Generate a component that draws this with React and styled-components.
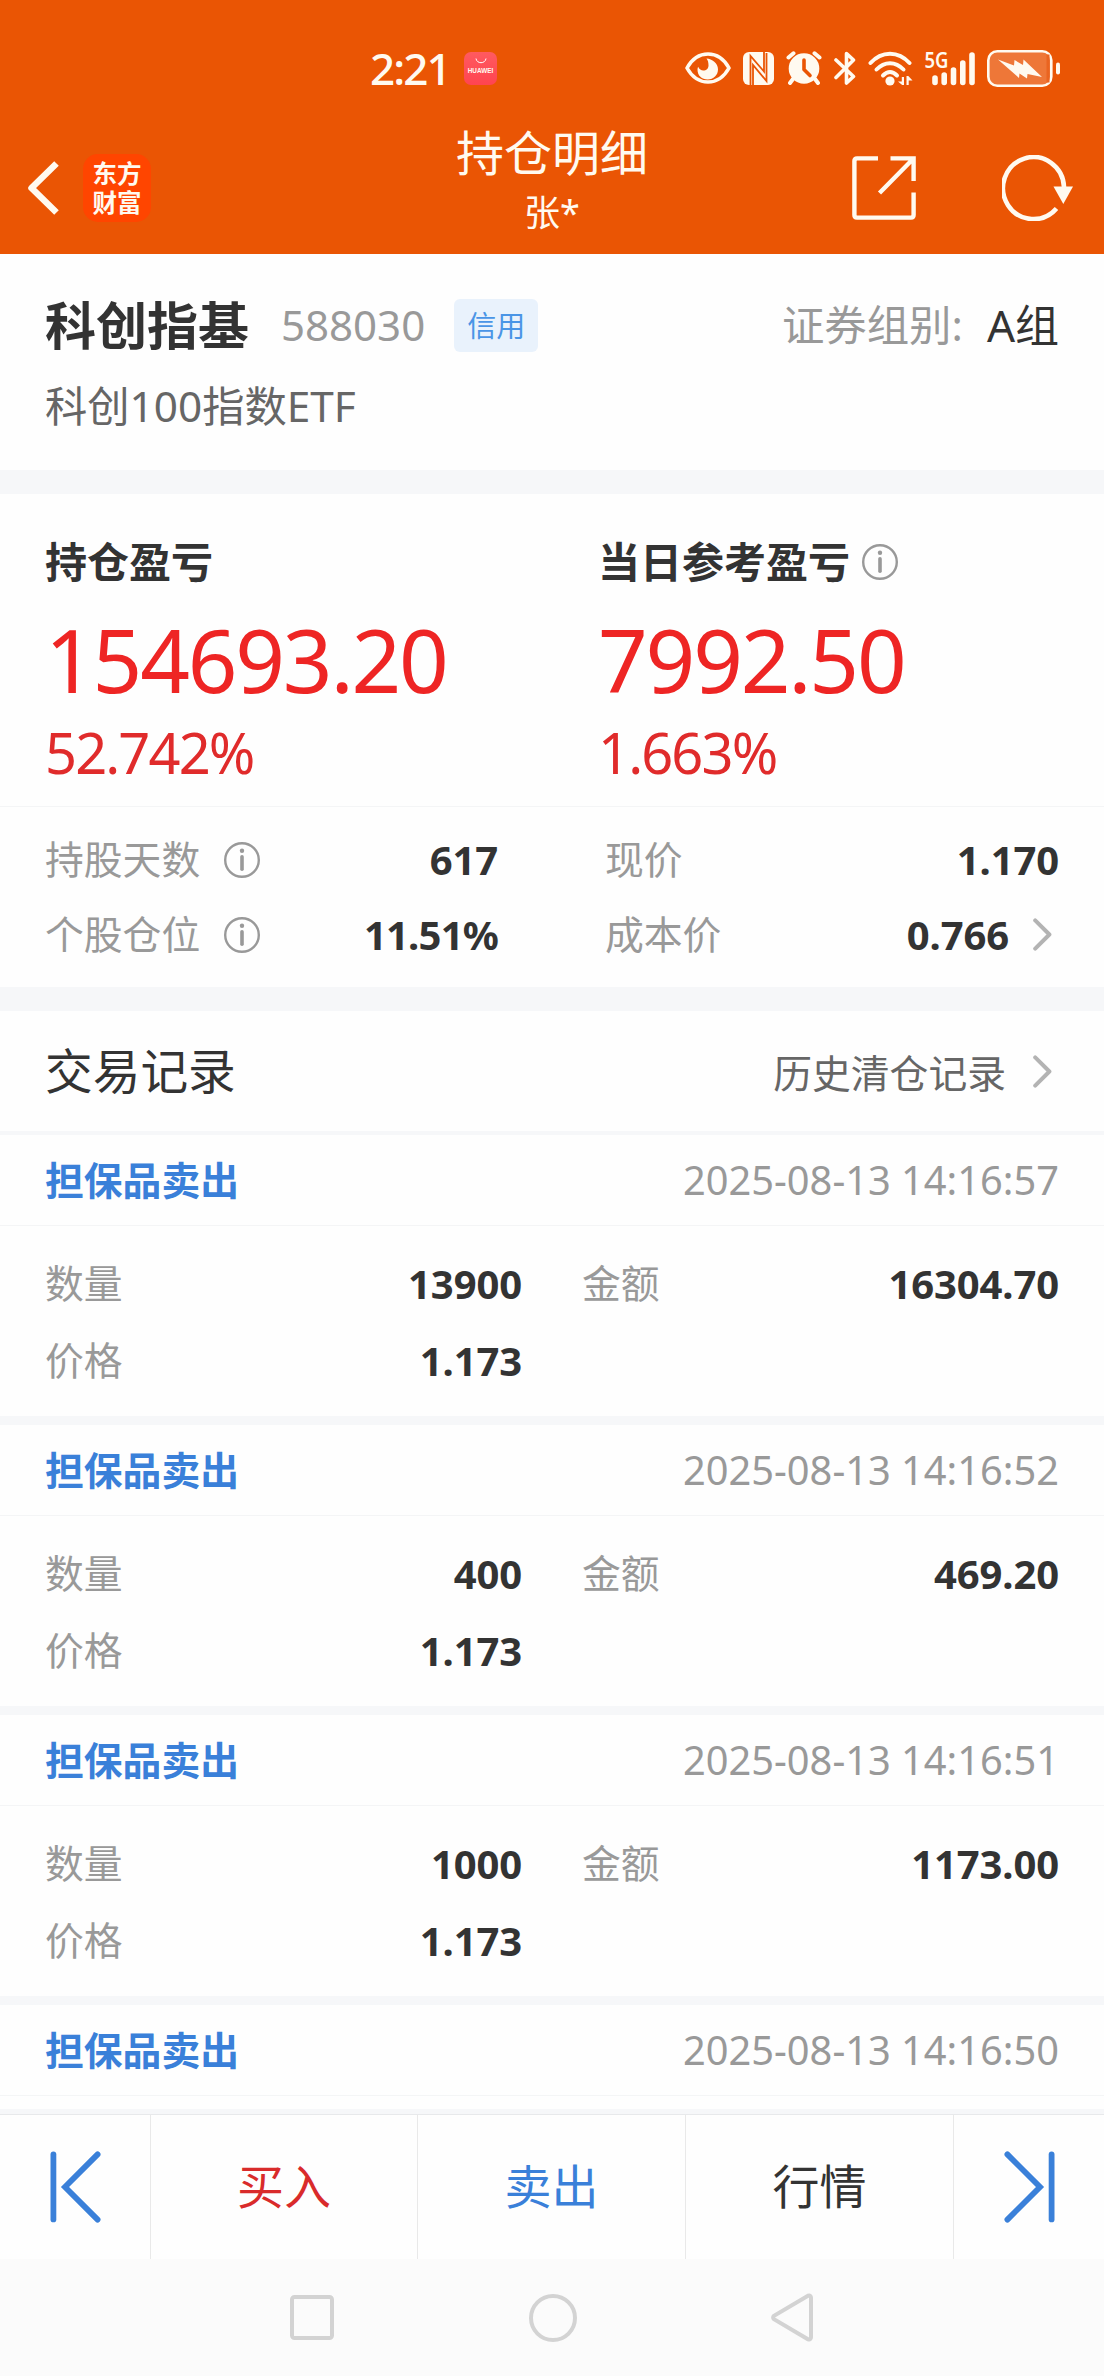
import styled, { createGlobalStyle } from "styled-components";

const GlobalStyle = createGlobalStyle`
  * {
    box-sizing: border-box;
  }
  body {
    margin: 0;
    background-color: #fff;
    color: #333;
    font-family: "Noto Sans", "Noto Sans CJK SC", sans-serif;
    line-height: 1.4;
  }
  svg {
    display: block;
    flex-shrink: 0;
  }
`;

const Screen = styled.div`
  display: flex;
  flex-direction: column;
  width: 1104px;
  height: 2376px;
  overflow: hidden;
  background-color: #fefefe;
`;

const StatusBar = styled.div`
  display: flex;
  align-items: center;
  height: 110px;
  padding: 26px 44px 0 370px;
  background-color: #ea5504;
  color: #fffaf0;
`;

const Clock = styled.span`
  width: 94px;
  font-size: 44px;
  font-weight: 500;
  line-height: 50px;
  letter-spacing: -1.9px;
`;

const GalleryBadge = styled.span`
  display: flex;
  flex-direction: column;
  align-items: center;
  gap: 3px;
  width: 33px;
  height: 33px;
  padding-top: 6px;
  border-radius: 7px;
  background: linear-gradient(#ff5a60, #ff4450);
  font-family: "Liberation Sans", sans-serif;
  font-size: 6.4px;
  font-weight: 700;
  line-height: 8px;
`;

const StatusIcons = styled.div`
  display: flex;
  align-items: center;
  gap: 12px;
  margin-left: auto;
`;

const TitleBar = styled.header`
  display: grid;
  grid-template-columns: 1fr 240px 1fr;
  align-items: center;
  height: 144px;
  padding: 10px 27px 12px;
  background-color: #ea5504;
  color: #fffaf0;
`;

const TitleSide = styled.div`
  display: flex;
  align-items: center;
  justify-content: ${(props) => (props.$end ? "flex-end" : "flex-start")};
  gap: ${(props) => (props.$end ? "86px" : "22px")};
  padding-top: 13px;
  margin: 0 ${(props) => (props.$end ? "4px" : "0")} 0 ${(props) => (props.$end ? "0" : "-2px")};
`;

const Brand = styled.div`
  width: 68px;
  height: 68px;
  padding-top: 5px;
  border-radius: 15px;
  background-color: #ff4500;
  font-size: 24.5px;
  font-weight: 700;
  line-height: 29px;
  text-align: center;
`;

const TitleText = styled.div`
  text-align: center;
`;

const Title = styled.h1`
  margin: 0;
  font-size: 48px;
  font-weight: 400;
  line-height: 64px;
`;

const Account = styled.div`
  font-size: 36px;
  line-height: 56px;
`;

const Gap = styled.div`
  flex-shrink: 0;
  height: ${(props) => props.$size}px;
  background-color: #f6f7f9;
`;

const StockCard = styled.section`
  height: 216px;
  padding: 40px 45px 0;
`;

const StockRow = styled.div`
  display: flex;
  align-items: center;
  height: 62px;
`;

const StockName = styled.span`
  font-size: 51px;
  font-weight: 700;
  line-height: 62px;
`;

const StockCode = styled.span`
  margin-left: 32px;
  color: #999;
  font-size: 42px;
`;

const Tag = styled.span`
  width: 84px;
  height: 53px;
  margin-left: 29px;
  border-radius: 6px;
  background-color: #e9f2fc;
  color: #4a95e6;
  font-size: 29px;
  line-height: 53px;
  text-align: center;
`;

const Group = styled.span`
  display: flex;
  gap: 24px;
  margin-left: auto;
  font-size: 42.4px;
  line-height: 62px;
`;

const GroupName = styled.span`
  font-size: 44px;
`;

const Muted = styled.span`
  color: #999;
`;

const FundName = styled.div`
  margin-top: 18px;
  color: #666;
  font-size: 42.3px;
  line-height: 64px;
`;

const Profit = styled.section`
  display: grid;
  grid-template-columns: 553px 1fr;
  height: 313px;
  padding: 40px 45px 0;
  border-bottom: 1px solid #f4f5f6;
`;

const ProfitTitle = styled.div`
  display: flex;
  align-items: center;
  gap: 12px;
  height: 56px;
  font-size: 42px;
  font-weight: 700;
`;

const ProfitAmount = styled.div`
  margin-top: 19px;
  color: #ee2524;
  font-size: 87px;
  line-height: 100px;
  letter-spacing: -2.2px;
`;

const ProfitRate = styled.div`
  margin-top: 11px;
  color: #e02b2b;
  font-size: 56px;
  line-height: 64px;
  letter-spacing: -1.9px;
`;

const Details = styled.section`
  display: grid;
  grid-template-columns: 453px 454px;
  grid-auto-rows: 75px;
  justify-content: space-between;
  height: 180px;
  padding: 15px 45px 0;
`;

const Field = styled.div`
  display: flex;
  align-items: center;
`;

const Label = styled.span`
  margin-right: 24px;
  color: #999;
  font-size: 38.8px;
`;

const Value = styled.span`
  margin-left: auto;
  font-size: 40px;
  font-weight: 700;
  letter-spacing: ${(props) => (props.$tight ? "-0.8px" : "-0.1px")};
`;

const ArrowSlot = styled.span`
  padding: 0 7px 0 ${(props) => props.$space}px;
`;

const RecordsHeader = styled.div`
  display: flex;
  align-items: center;
  height: 120px;
  padding: 0 45px;
`;

const RecordsTitle = styled.h2`
  margin: 0 auto 0 0;
  font-size: 47.7px;
  font-weight: 400;
`;

const HistoryLink = styled.span`
  padding-top: 5px;
  color: #666;
  font-size: 38.8px;
`;

const Records = styled.div`
  flex-shrink: 0;
  height: 974px;
  overflow: hidden;
`;

const Record = styled.article`
  height: 290px;
  border-bottom: 9px solid #f6f7f9;
`;

const RecordHead = styled.div`
  display: flex;
  align-items: center;
  justify-content: space-between;
  height: 91px;
  padding: 0 45px;
  border-bottom: 1px solid #f4f5f6;
`;

const RecordType = styled.span`
  color: #3a80d9;
  font-size: 38.8px;
  font-weight: 700;
`;

const RecordTime = styled.time`
  color: #999;
  font-size: 39.8px;
`;

const RecordBody = styled.div`
  display: grid;
  grid-template-columns: 477px 477px;
  grid-auto-rows: 77px;
  justify-content: space-between;
  padding: 19px 45px 0;
`;

const ActionBar = styled.nav`
  display: grid;
  grid-template-columns: 151px 267px 268px 268px 150px;
  height: 145px;
  flex-shrink: 0;
  border-top: 1px solid #e8e9eb;
`;

const Action = styled.button`
  display: flex;
  align-items: center;
  justify-content: center;
  padding: 0;
  border: none;
  border-right: 1px solid #e9e9e9;
  background: none;
  color: ${(props) => props.$color};
  font-family: inherit;
  font-size: 47px;
  line-height: 1.3;
  &:last-child {
    border-right: none;
  }
`;

const SystemBar = styled.div`
  display: flex;
  align-items: center;
  justify-content: space-between;
  height: 117px;
  padding: 0 291px 0 290px;
  background-color: #fbfbfb;
`;

const records = [
  { time: "2025-08-13 14:16:57", count: "13900", amount: "16304.70", price: "1.173" },
  { time: "2025-08-13 14:16:52", count: "400", amount: "469.20", price: "1.173" },
  { time: "2025-08-13 14:16:51", count: "1000", amount: "1173.00", price: "1.173" },
  { time: "2025-08-13 14:16:50", count: "", amount: "", price: "" },
];

function InfoIcon() {
  return (
    <svg width="36" height="36" viewBox="0 0 36 36" fill="none" stroke="#999">
      <circle cx="18" cy="18" r="16.8" strokeWidth="2.4" />
      <path d="M18 14.8v12.4" strokeWidth="3.6" strokeLinecap="round" />
      <circle cx="18" cy="8.8" r="2.2" fill="#999" stroke="none" />
    </svg>
  );
}

function ArrowIcon() {
  return (
    <svg width="19" height="33" viewBox="0 0 19 33" fill="none">
      <path
        d="M2.2 2.4 16.4 16.5 2.2 30.6"
        stroke="#b3b3b3"
        strokeWidth="4"
        strokeLinecap="round"
        strokeLinejoin="round"
      />
    </svg>
  );
}

function SkipIcon({ flip }) {
  return (
    <svg
      width="51"
      height="72"
      viewBox="0 0 51 72"
      fill="none"
      stroke="#3a80d9"
      strokeWidth="5.8"
      strokeLinecap="round"
    >
      <g transform={flip ? "translate(51 0) scale(-1 1)" : undefined}>
        <path d="M3.4 3.4v65" />
        <path d="M47.6 3.4 15 36l32.6 32.6" />
      </g>
    </svg>
  );
}

function StatusGlyphs() {
  return (
    <StatusIcons>
      <svg width="46" height="32" viewBox="0 0 46 32" fill="none">
        <path
          d="M2 16C7 7 14.5 2 23 2s16 5 21 14c-5 9-12.500 14-21 14S7 25 2 16Z"
          stroke="currentColor"
          strokeWidth="3.6"
          strokeLinejoin="round"
        />
        <path
          d="M21.500 6.500c5.500.3 11.500 4.600 11.500 10.800 0 6-4.500 10.200-10.300 10.200s-10.200-4-10.200-9.800c0-1 .2-2 .6-3 1.300 2.500 3 3.700 5.200 3.700 3 0 5.200-2 5.200-5 0-2.900-.5-4.900-2-6.900Z"
          fill="currentColor"
        />
      </svg>
      <svg width="31" height="33" viewBox="0 0 31 33">
        <rect width="31" height="33" rx="6" fill="currentColor" />
        <path
          d="M7.500 33V4l13.500 15.500V0M10 33V13l13.500 16V1"
          fill="none"
          stroke="#ea5504"
          strokeWidth="1.8"
        />
      </svg>
      <svg width="36" height="34" viewBox="0 0 36 34" fill="none" stroke="currentColor">
        <circle cx="18" cy="17.5" r="15.3" fill="currentColor" stroke="none" />
        <path d="M5 6 1 10M31 6l4 4" stroke="#ea5504" strokeWidth="2" />
        <path d="M2.500 6.500 7.500 2.300M33.500 6.500 28.500 2.300" strokeWidth="4" strokeLinecap="round" />
        <path d="M7 28l-3 4M29 28l3 4" strokeWidth="4" strokeLinecap="round" />
        <path d="M18 9v9.500l6 6" stroke="#ea5504" strokeWidth="3.6" strokeLinecap="round" strokeLinejoin="round" />
      </svg>
      <svg width="22" height="35" viewBox="0 0 22 35" fill="none">
        <path
          d="M2 9l17.500 16.500L12.500 32V2.500l7 6.500L2 26.500"
          stroke="currentColor"
          strokeWidth="3.6"
          strokeLinecap="round"
          strokeLinejoin="round"
        />
      </svg>
      <svg width="45" height="35" viewBox="0 0 45 35" fill="none" stroke="currentColor" strokeLinecap="round">
        <path d="M2.500 12c11-12.500 28-12.500 39 0" strokeWidth="4" />
        <path d="M8.500 18.500c8-8.500 19-8.500 27 0" strokeWidth="4" />
        <path d="M15 24.500c4.500-4.500 9.500-4.500 14 0" strokeWidth="4" />
        <circle cx="22" cy="30" r="4.6" fill="currentColor" stroke="none" />
        <path
          d="M36 26v8h-1.800L30 30.500h3.800V26ZM38.500 34v-9h1.800l4.200 4.500h-3.800V34Z"
          fill="currentColor"
          stroke="none"
        />
      </svg>
      <svg width="50" height="35" viewBox="0 0 50 35" overflow="visible" fill="none" stroke="currentColor">
        <text
          x="-0.5"
          y="17"
          fill="currentColor"
          stroke="none"
          fontSize="22"
          fontWeight="600"
          fontFamily="Noto Sans"
          textLength="24"
          lengthAdjust="spacingAndGlyphs"
        >
          5G
        </text>
        <path
          d="M10 27v4.500M19.200 24v7.500M28.500 19v12.500M37.800 12v19.500M47 4v27.500"
          strokeWidth="5.6"
          strokeLinecap="round"
        />
      </svg>
      <svg width="73" height="37" viewBox="0 0 73 37">
        <rect
          x="1.3"
          y="1.3"
          width="63"
          height="34.4"
          rx="9"
          fill="#ee7738"
          stroke="currentColor"
          strokeWidth="2.6"
        />
        <path d="M61 4.500v28" stroke="#ea6420" strokeWidth="3" />
        <path
          d="M11 9.500l16 6 .5-5.500 8.500 5 .5-5.500L55 27l-14.500-3-.5 4.500-7.500-5-.5 4.500Z"
          fill="currentColor"
        />
        <rect x="69" y="12.5" width="4" height="12" rx="2" fill="currentColor" />
      </svg>
    </StatusIcons>
  );
}

function Header() {
  return (
    <>
      <StatusBar>
        <Clock>2:21</Clock>
        <GalleryBadge>
          <svg width="12" height="6" viewBox="0 0 12 6" fill="none">
            <path d="M1 .5c.6 5.600 9.400 5.600 10 0" stroke="#fff" strokeWidth="1" />
          </svg>
          HUAWEI
        </GalleryBadge>
        <StatusGlyphs />
      </StatusBar>
      <TitleBar>
        <TitleSide>
          <svg width="36" height="56" viewBox="0 0 36 56" fill="none">
            <path d="M31.500 3.500 6.500 28l25 24.500" stroke="currentColor" strokeWidth="6.5" strokeLinejoin="round" />
          </svg>
          <Brand>
            东方
            <br />
            财富
          </Brand>
        </TitleSide>
        <TitleText>
          <Title>持仓明细</Title>
          <Account>张*</Account>
        </TitleText>
        <TitleSide $end>
          <svg width="64" height="64" viewBox="0 0 64 64" fill="none" stroke="currentColor" strokeWidth="4.4">
            <path d="M26 2.400H5q-2.600 0-2.600 2.600v54q0 2.600 2.600 2.600h54q2.600 0 2.600-2.600V36.500" />
            <path d="M38.500 2.400h23.100v22.500M61 3 27.500 37" />
          </svg>
          <svg width="71" height="66" viewBox="0 0 71 66" fill="none">
            <path d="M54.500 53.500A30.500 31 0 1 1 62 32" stroke="currentColor" strokeWidth="4.6" />
            <path d="M51.500 31.500h19.500L61.300 49Z" fill="currentColor" />
          </svg>
        </TitleSide>
      </TitleBar>
    </>
  );
}

function App() {
  return (
    <>
      <GlobalStyle />
      <Screen>
        <Header />
        <StockCard>
          <StockRow>
            <StockName>科创指基</StockName>
            <StockCode>588030</StockCode>
            <Tag>信用</Tag>
            <Group>
              <Muted>证券组别:</Muted>
              <GroupName>A组</GroupName>
            </Group>
          </StockRow>
          <FundName>科创100指数ETF</FundName>
        </StockCard>
        <Gap $size={24} />
        <Profit>
          <div>
            <ProfitTitle>持仓盈亏</ProfitTitle>
            <ProfitAmount>154693.20</ProfitAmount>
            <ProfitRate>52.742%</ProfitRate>
          </div>
          <div>
            <ProfitTitle>
              当日参考盈亏
              <InfoIcon />
            </ProfitTitle>
            <ProfitAmount>7992.50</ProfitAmount>
            <ProfitRate>1.663%</ProfitRate>
          </div>
        </Profit>
        <Details>
          <Field>
            <Label>持股天数</Label>
            <InfoIcon />
            <Value>617</Value>
          </Field>
          <Field>
            <Label>现价</Label>
            <Value>1.170</Value>
          </Field>
          <Field>
            <Label>个股仓位</Label>
            <InfoIcon />
            <Value $tight>11.51%</Value>
          </Field>
          <Field>
            <Label>成本价</Label>
            <Value>0.766</Value>
            <ArrowSlot $space={24}>
              <ArrowIcon />
            </ArrowSlot>
          </Field>
        </Details>
        <Gap $size={24} />
        <RecordsHeader>
          <RecordsTitle>交易记录</RecordsTitle>
          <HistoryLink>历史清仓记录</HistoryLink>
          <ArrowSlot $space={27}>
            <ArrowIcon />
          </ArrowSlot>
        </RecordsHeader>
        <Gap $size={4} />
        <Records>
          {records.map((record) => (
            <Record key={record.time}>
              <RecordHead>
                <RecordType>担保品卖出</RecordType>
                <RecordTime>{record.time}</RecordTime>
              </RecordHead>
              {record.count && (
                <RecordBody>
                  <Field>
                    <Label>数量</Label>
                    <Value>{record.count}</Value>
                  </Field>
                  <Field>
                    <Label>金额</Label>
                    <Value>{record.amount}</Value>
                  </Field>
                  <Field>
                    <Label>价格</Label>
                    <Value>{record.price}</Value>
                  </Field>
                </RecordBody>
              )}
            </Record>
          ))}
        </Records>
        <Gap $size={5} />
        <ActionBar>
          <Action>
            <SkipIcon />
          </Action>
          <Action $color="#d92b2b">买入</Action>
          <Action $color="#3a80d9">卖出</Action>
          <Action $color="#333">行情</Action>
          <Action>
            <SkipIcon flip />
          </Action>
        </ActionBar>
        <SystemBar>
          <svg width="44" height="45" viewBox="0 0 44 45" fill="none" stroke="#d3d3d3" strokeWidth="4">
            <rect x="2" y="2" width="40" height="41" rx="2.5" />
          </svg>
          <svg width="48" height="48" viewBox="0 0 48 48" fill="none" stroke="#d3d3d3" strokeWidth="4">
            <circle cx="24" cy="24" r="22" />
          </svg>
          <svg width="42" height="49" viewBox="0 0 42 49" fill="none" stroke="#d3d3d3" strokeWidth="4">
            <path d="M37 2.700 3 22.800q-1.800 1.700 0 3.400l34 20.100q3 .8 3-2V4.700q0-2.800-3-2Z" />
          </svg>
        </SystemBar>
      </Screen>
    </>
  );
}

export default App;
